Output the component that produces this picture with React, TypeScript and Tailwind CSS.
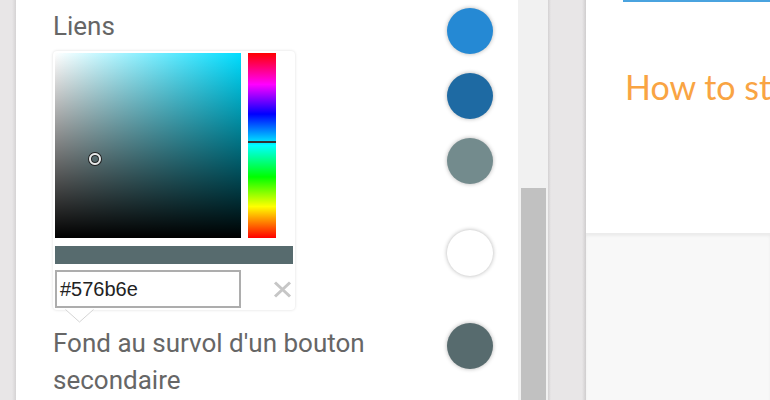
import React from 'react';

const swatches = [
  { color: 'bg-[#2589d4]', gap: 'mt-[8px]' },
  { color: 'bg-[#1e6aa3]', gap: 'mt-[19px]' },
  { color: 'bg-[#738b8d]', gap: 'mt-[19px]' },
  { color: 'bg-white', gap: 'mt-[46px]' },
  { color: 'bg-[#576b6e]', gap: 'mt-[47px]' },
];

function ColorPicker() {
  return (
    <div className="w-fit">
      <div className="p-[2px] bg-white rounded-[4px] shadow-[0_0_3px_rgba(0,0,0,0.14)]">
        <div className="flex gap-[7px] h-[185px]">
          {/* saturation / value area */}
          <div className="relative w-[186px] h-full bg-[linear-gradient(to_top,#000,transparent),linear-gradient(to_right,#fff,#00ddff)]">
            <div className="absolute left-[34px] top-[100px] w-[12px] h-[12px] rounded-full border-2 border-[#e8e8e8] shadow-[0_0_0_1px_#222,inset_0_0_0_1px_#222]" />
          </div>
          {/* hue bar */}
          <div className="relative w-[28px] h-full bg-[linear-gradient(to_bottom,#f00,#f0f_17%,#00f_33%,#0ff_50%,#0f0_67%,#ff0_83%,#f00)]">
            <div className="absolute left-0 right-0 top-[88px] h-[2px] bg-[#333]" />
          </div>
        </div>
        <div className="mt-[8px] h-[18px] w-[238px] bg-[#576b6e]" />
        <div className="mt-[6px] flex items-center">
          <div className="w-[186px] h-[38px] border-2 border-[#adadad] flex items-center pl-[3px] text-[20px] text-[#222] font-['Liberation_Sans',Arial,sans-serif]">
            #576b6e
          </div>
          <svg className="ml-auto mr-[1px]" width="19" height="17" viewBox="0 0 19 17">
            <path d="M2 1.5 L17 15.5 M17 1.5 L2 15.5" stroke="#c6c6c6" strokeWidth="3" fill="none" />
          </svg>
        </div>
      </div>
      <svg className="ml-[12px] -mt-[1px] block" width="29" height="14" viewBox="0 0 29 14">
        <path d="M0.5 0.5 L14.5 13 L28.5 0.5" fill="#fff" stroke="#d4d4d4" strokeWidth="1" />
      </svg>
    </div>
  );
}

export default function App() {
  return (
    <div className="w-[770px] h-[400px] overflow-hidden flex bg-[#e8e6e7] font-['Roboto',sans-serif]">
      {/* left gutter */}
      <div className="w-[16px] shrink-0 bg-[linear-gradient(to_right,#e8e6e7_12px,#d5d3d4)]" />

      {/* settings panel */}
      <div className="w-[502px] shrink-0 bg-white flex pl-[37px] pr-[25px]">
        <div className="flex flex-col">
          <div className="pt-[8px] text-[26px] leading-[37px] text-[#666]">Liens</div>
          <div className="mt-[6px]">
            <ColorPicker />
          </div>
          <div className="mt-[2px] text-[26px] leading-[37px] text-[#666] w-[360px]">
            Fond au survol d'un bouton secondaire
          </div>
        </div>
        <div className="ml-auto flex flex-col">
          {swatches.map((s, i) => (
            <div
              key={i}
              className={`${s.gap} w-[46px] h-[46px] rounded-full ${s.color} shadow-[0_0_4px_rgba(0,0,0,0.3)]`}
            />
          ))}
        </div>
      </div>

      {/* scrollbar */}
      <div className="w-[30px] shrink-0 bg-[#f1f1f1] flex flex-col">
        <div className="mt-[188px] ml-[3px] mr-[2px] flex-1 bg-[#c1c1c1]" />
      </div>

      {/* gap between panes */}
      <div className="w-[38px] shrink-0 bg-[linear-gradient(to_right,#d3d1d2,#e8e6e7_3px,#e8e6e7_34px,#cfcdce)]" />

      {/* preview pane */}
      <div className="flex-1 flex flex-col min-w-0">
        <div className="h-[233px] bg-white flex flex-col">
          <div className="ml-[37px] h-[2px] bg-[#4aa3df]" />
          <div className="mt-[65px] pl-[39px] whitespace-nowrap overflow-hidden text-[34px] leading-[40px] text-[#f9a443] font-['Lato',sans-serif]">
            How to start
          </div>
        </div>
        <div className="flex-1 bg-[#f8f8f8] shadow-[inset_0_3px_3px_rgba(0,0,0,0.05)]" />
      </div>
    </div>
  );
}
